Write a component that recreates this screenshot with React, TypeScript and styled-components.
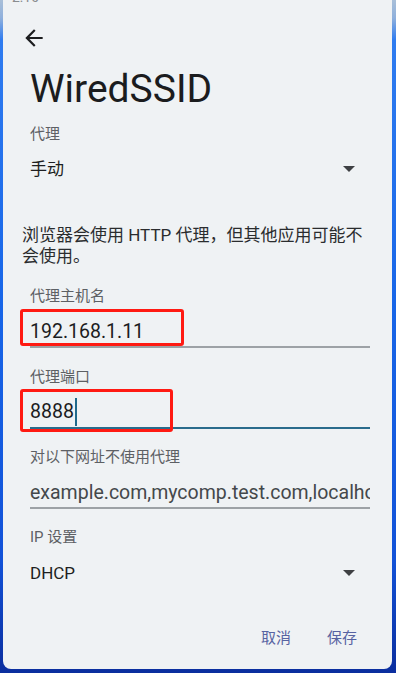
import React from "react";
import styled, { createGlobalStyle } from "styled-components";

const GlobalStyle = createGlobalStyle`
  html, body {
    margin: 0;
    padding: 0;
    width: 396px;
    height: 673px;
    overflow: hidden;
  }
  body {
    background: linear-gradient(
      180deg,
      #a9bfd8 0px,
      #8fb0dc 18px,
      #2f7cf0 40px,
      #1866e8 300px,
      #1252d8 560px,
      #0b2e9e 673px
    );
    font-family: Roboto, "Noto Sans CJK SC", sans-serif;
  }
`;

const Panel = styled.div`
  box-sizing: border-box;
  margin-left: 3px;
  width: 389px;
  height: 669px;
  background: #eff2f4;
  border-radius: 0 0 8px 8px;
  padding: 0 22px 0 19px;
  display: flex;
  flex-direction: column;
  overflow: hidden;
`;

const StatusBar = styled.div`
  height: 8px;
  overflow: hidden;
  margin-left: -10px;
  color: #8a8d90;
  font-size: 14px;
  line-height: 14px;
  span {
    display: block;
    margin-top: -10px;
  }
`;

const BackButton = styled.button`
  margin: 17px 0 0 -1px;
  padding: 0;
  width: 26px;
  height: 26px;
  border: none;
  background: none;
  color: #1c1d1f;
  display: flex;
`;

const Title = styled.h1`
  margin: 14px 0 0;
  padding-left: 8px;
  font-family: Roboto, sans-serif;
  font-weight: 400;
  font-size: 39px;
  line-height: 48px;
  color: #1b1c1e;
`;

const Field = styled.div<{ $gap?: number }>`
  display: flex;
  flex-direction: column;
  padding-left: 8px;
  margin-top: ${(p) => p.$gap ?? 18.5}px;
`;

const Label = styled.div`
  font-size: 15px;
  line-height: 20px;
  color: #5d6064;
`;

const Spinner = styled.div`
  margin-top: 13.5px;
  display: flex;
  align-items: center;
  justify-content: space-between;
  font-size: 17px;
  line-height: 24px;
  color: #1e1f21;
`;

const Caret = styled.span`
  margin-right: 15px;
  width: 0;
  height: 0;
  border-left: 6px solid transparent;
  border-right: 6px solid transparent;
  border-top: 6px solid #3e4043;
`;

const Note = styled.p`
  margin: 44px 0 0;
  width: 346px;
  font-size: 17px;
  line-height: 21px;
  color: #2a2c2e;
`;

const Input = styled.div<{ $focused?: boolean; $muted?: boolean }>`
  position: relative;
  margin-top: 11px;
  display: flex;
  align-items: center;
  height: 28px;
  padding-bottom: 1px;
  border-bottom: 2px solid ${(p) => (p.$focused ? "#2a6c8c" : "#9da2a6")};
  font-size: 19.5px;
  white-space: nowrap;
  color: ${(p) => (p.$muted ? "#44484b" : "#1b1c1e")};
`;

const Clip = styled.span`
  display: block;
  overflow: hidden;
  width: 100%;
`;

const Cursor = styled.span`
  display: inline-block;
  width: 2px;
  height: 28px;
  margin-left: 1px;
  background: #1f6a8c;
`;

const Mark = styled.span<{ $top: number; $width: number; $height: number }>`
  position: absolute;
  left: -10px;
  top: ${(p) => p.$top}px;
  width: ${(p) => p.$width}px;
  height: ${(p) => p.$height}px;
  box-sizing: border-box;
  border: 3px solid #ff1a12;
  border-radius: 3px;
  pointer-events: none;
`;

const Actions = styled.div`
  margin-top: 41px;
  display: flex;
  justify-content: flex-end;
  gap: 10px;
`;

const TextButton = styled.button`
  border: none;
  background: none;
  padding: 0 13px;
  font-family: "Noto Sans CJK SC", sans-serif;
  font-size: 15px;
  line-height: 22px;
  color: #5763a2;
`;

const ArrowBack = () => (
  <svg width="26" height="26" viewBox="0 0 24 24" fill="currentColor">
    <path d="M20 11H7.83l5.59-5.59L12 4l-8 8 8 8 1.41-1.41L7.83 13H20v-2z" />
  </svg>
);

const App = () => {
  return (
    <>
      <GlobalStyle />
      <Panel>
        <StatusBar>
          <span>2:10</span>
        </StatusBar>
        <BackButton aria-label="back">
          <ArrowBack />
        </BackButton>
        <Title>WiredSSID</Title>

        <Field $gap={10.5}>
          <Label>代理</Label>
          <Spinner>
            <span>手动</span>
            <Caret />
          </Spinner>
        </Field>

        <Note>浏览器会使用 HTTP 代理，但其他应用可能不会使用。</Note>

        <Field $gap={19}>
          <Label>代理主机名</Label>
          <Input>
            <span>192.168.1.11</span>
            <Mark $top={-8} $width={164} $height={37} />
          </Input>
        </Field>

        <Field>
          <Label>代理端口</Label>
          <Input $focused>
            <span>8888</span>
            <Cursor />
            <Mark $top={-8.5} $width={153} $height={43} />
          </Input>
        </Field>

        <Field>
          <Label>对以下网址不使用代理</Label>
          <Input $muted>
            <Clip>example.com,mycomp.test.com,localhost</Clip>
          </Input>
        </Field>

        <Field $gap={18}>
          <Label>IP 设置</Label>
          <Spinner>
            <span>DHCP</span>
            <Caret />
          </Spinner>
        </Field>

        <Actions>
          <TextButton>取消</TextButton>
          <TextButton>保存</TextButton>
        </Actions>
      </Panel>
    </>
  );
};

export default App;
